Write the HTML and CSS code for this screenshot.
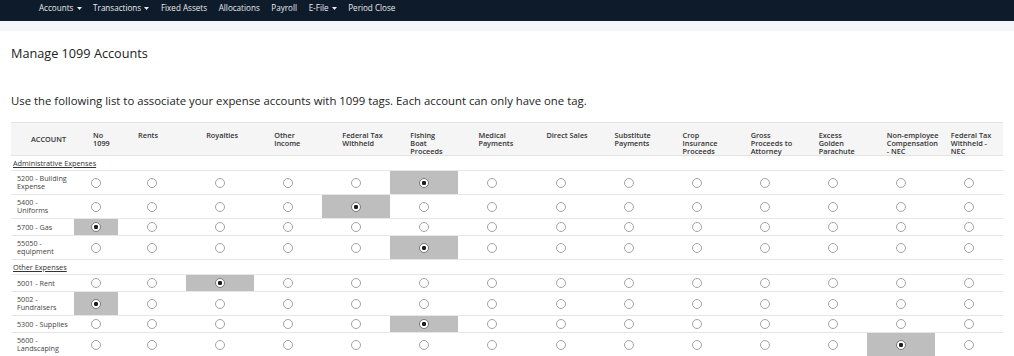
FILE: index.html
```html
<!DOCTYPE html>
<html>
<head>
<meta charset="utf-8">
<link rel="stylesheet" href="styles.css">
</head>
<body>
<nav class="topnav">
  <a class="nav-item">Accounts <svg class="caret" width="5" height="3" viewBox="0 0 5 3"><path d="M0 0H5L2.5 3Z" fill="currentColor"/></svg></a>
  <a class="nav-item">Transactions <svg class="caret" width="5" height="3" viewBox="0 0 5 3"><path d="M0 0H5L2.5 3Z" fill="currentColor"/></svg></a>
  <a class="nav-item">Fixed Assets</a>
  <a class="nav-item">Allocations</a>
  <a class="nav-item">Payroll</a>
  <a class="nav-item">E-File <svg class="caret" width="5" height="3" viewBox="0 0 5 3"><path d="M0 0H5L2.5 3Z" fill="currentColor"/></svg></a>
  <a class="nav-item">Period Close</a>
</nav>
<div class="subbar"></div>
<main class="content">
  <h1 class="title">Manage 1099 Accounts</h1>
  <p class="desc">Use the following list to associate your expense accounts with 1099 tags. Each account can only have one tag.</p>
  <table class="grid">
    <colgroup>
      <col class="c-acc"><col class="c-no">
      <col class="c-std"><col class="c-std"><col class="c-std"><col class="c-std"><col class="c-std"><col class="c-std"><col class="c-std"><col class="c-std"><col class="c-std"><col class="c-std"><col class="c-std"><col class="c-std"><col class="c-std">
    </colgroup>
    <thead>
      <tr>
        <th class="h-acc">ACCOUNT</th>
        <th class="h-no">No<br>1099</th>
        <th>Rents</th>
        <th>Royalties</th>
        <th>Other<br>Income</th>
        <th>Federal Tax<br>Withheld</th>
        <th>Fishing<br>Boat<br>Proceeds</th>
        <th>Medical<br>Payments</th>
        <th>Direct Sales</th>
        <th>Substitute<br>Payments</th>
        <th>Crop<br>Insurance<br>Proceeds</th>
        <th>Gross<br>Proceeds to<br>Attorney</th>
        <th>Excess<br>Golden<br>Parachute</th>
        <th>Non-employee<br>Compensation<br>- NEC</th>
        <th class="h-last">Federal Tax<br>Withheld -<br>NEC</th>
      </tr>
    </thead>
    <tbody id="body"></tbody>
  </table>
</main>
<script src="app.js"></script>
</body>
</html>
```
FILE: app.js
```js
const groups = [
  { name: "Administrative Expenses", rows: [
    ["5200 - Building<br>Expense", 5],
    ["5400 -<br>Uniforms", 4],
    ["5700 - Gas", 0],
    ["55050 -<br>equipment", 5]
  ]},
  { name: "Other Expenses", rows: [
    ["5001 - Rent", 2],
    ["5002 -<br>Fundraisers", 0],
    ["5300 - Supplies", 5],
    ["5600 -<br>Landscaping", 12]
  ]}
];
const body = document.getElementById("body");
let html = "";
let n = 0;
for (const g of groups) {
  html += `<tr class="group"><td colspan="15"><span class="group-name">${g.name}</span></td></tr>`;
  for (const [acc, sel] of g.rows) {
    n++;
    html += `<tr class="row"><td class="acc">${acc}</td>`;
    for (let i = 0; i < 14; i++) {
      const on = i === sel;
      html += `<td class="opt${on ? " sel" : ""}"><input type="radio" name="r${n}"${on ? " checked" : ""}></td>`;
    }
    html += `</tr>`;
  }
}
body.innerHTML = html;
```
FILE: styles.css
```css
* { box-sizing: border-box; }
body {
  margin: 0;
  font-family: "Open Sans", "Liberation Sans", sans-serif;
  color: #333;
  background: #fff;
}
.topnav {
  height: 21px;
  background: #0e1b2a;
  display: flex;
  align-items: flex-start;
  padding: 2px 0 0 39px;
  gap: 11.6px;
}
.nav-item {
  color: #e9ecef;
  font-size: 8.1px;
  line-height: 11px;
  white-space: nowrap;
}
.caret { vertical-align: 1px; margin-left: 1px; }
.subbar {
  height: 10px;
  background: #f4f5f7;
}
.content { padding: 0 11px; }
.title {
  margin: 12px 0 0;
  font-size: 12.7px;
  font-weight: 400;
  line-height: 20px;
  color: #222;
}
.desc {
  margin: 30px 0 0;
  font-size: 11.35px;
  line-height: 16px;
  color: #222;
}
.grid {
  margin-top: 13px;
  width: 992px;
  table-layout: fixed;
  border-collapse: collapse;
}
.c-acc { width: 63px; }
.c-no { width: 44px; }
.c-std { width: 68px; }
thead th {
  background: #f5f5f5;
  border-top: 1px solid #e3e3e3;
  border-bottom: 1px solid #e3e3e3;
  height: 33px;
  padding: 8px 2px 0 20px;
  vertical-align: top;
  text-align: left;
  font-size: 7.3px;
  line-height: 8px;
  font-weight: 600;
  color: #333;
  white-space: nowrap;
}
thead th.h-acc {
  vertical-align: middle;
  text-align: center;
  padding: 0 0 0 12px;
}
thead th.h-no { padding-left: 19px; }
thead th.h-last { padding-left: 16px; }
.group td {
  padding: 3px 2px;
  font-size: 7.3px;
  line-height: 8px;
  border-bottom: 1px solid #e6e6e6;
}
.group-name { text-decoration: underline; color: #333; }
.row td {
  border-bottom: 1px solid #e6e6e6;
  padding: 3px 0;
  vertical-align: middle;
}
.row td.acc {
  padding: 3px 2px 4px 6px;
  font-size: 7.2px;
  line-height: 8px;
  color: #444;
  white-space: nowrap;
}
.opt { text-align: center; }
.opt.sel { background: #bebebe; }
.opt input {
  -webkit-appearance: none;
  appearance: none;
  display: block;
  margin: 0 auto;
  width: 10px;
  height: 10px;
  border: 1px solid #a3a3a3;
  border-radius: 50%;
  background: #fff;
}
.opt input:checked {
  border-color: #777;
  background: radial-gradient(circle, #1e1e1e 0 1.9px, #fff 2.5px);
}
```
